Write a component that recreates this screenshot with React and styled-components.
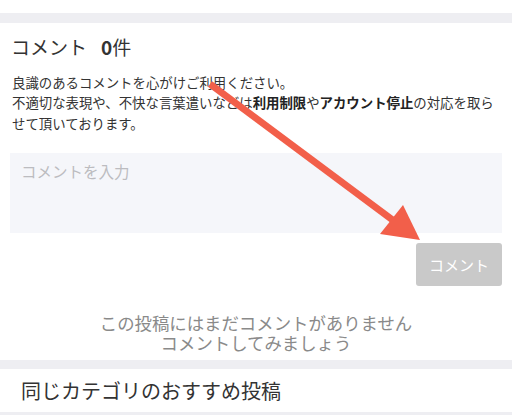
import React from "react";
import styled, { createGlobalStyle } from "styled-components";

const GlobalStyle = createGlobalStyle`
  html, body {
    margin: 0;
    padding: 0;
    background: #fff;
  }
  body {
    font-family: "Noto Sans CJK JP", "Noto Sans", sans-serif;
    color: #333;
  }
`;

const Page = styled.div`
  position: relative;
  width: 512px;
  height: 419px;
  overflow: hidden;
  padding-top: 13px;
  box-sizing: border-box;
`;

const Band = styled.div`
  height: ${props => props.h || 10}px;
  background: #eeeef2;
`;

const Section = styled.section`
  padding: 0 10px;
`;

const Title = styled.h2`
  margin: 12px 0 0;
  padding-left: 1px;
  font-size: 19px;
  line-height: 24px;
  font-weight: 400;
  color: #333;
  b {
    font-weight: 700;
    margin-left: 14px;
  }
`;

const Notice = styled.p`
  margin: 12.5px 0 0;
  padding-left: 2px;
  font-size: 13.4px;
  line-height: 20.5px;
  color: #333;
  b {
    font-weight: 700;
    color: #222;
  }
`;

const Input = styled.textarea`
  display: block;
  width: 100%;
  height: 80px;
  margin-top: 20px;
  box-sizing: border-box;
  border: none;
  outline: none;
  resize: none;
  background: #f5f6fa;
  padding: 8px 11px;
  font-family: "Noto Sans CJK JP", sans-serif;
  font-size: 15.5px;
  line-height: 20px;
  color: #333;
  &::placeholder {
    color: #bcbcc0;
  }
`;

const ButtonRow = styled.div`
  display: flex;
  justify-content: flex-end;
  margin-top: 10px;
`;

const SubmitButton = styled.button`
  width: 86px;
  height: 43px;
  border: none;
  border-radius: 3px;
  background: #c9c9c9;
  color: #fff;
  font-family: "Noto Sans CJK JP", sans-serif;
  font-size: 15px;
  padding: 0;
`;

const Empty = styled.p`
  margin: 27px 0 7px;
  text-align: center;
  font-size: 17.4px;
  line-height: 20px;
  color: #8a8a8a;
`;

const Heading = styled.h3`
  margin: 0;
  padding: 10px 21px 9px;
  font-size: 20px;
  line-height: 24px;
  font-weight: 400;
  color: #333;
`;

const Arrow = styled.svg`
  position: absolute;
  left: 0;
  top: 0;
  pointer-events: none;
`;

export default function App() {
  return (
    <Page>
      <GlobalStyle />
      <Band h={10} />
      <Section>
        <Title>
          コメント<b>0</b>件
        </Title>
        <Notice>
          良識のあるコメントを心がけご利用ください。
          <br />
          不適切な表現や、不快な言葉遣いなどは<b>利用制限</b>や<b>アカウント停止</b>の対応を取らせて頂いております。
        </Notice>
        <Input placeholder="コメントを入力" />
        <ButtonRow>
          <SubmitButton disabled>コメント</SubmitButton>
        </ButtonRow>
        <Empty>
          この投稿にはまだコメントがありません
          <br />
          コメントしてみましょう
        </Empty>
      </Section>
      <Band h={9} />
      <Heading>同じカテゴリのおすすめ投稿</Heading>
      <Band h={3} />
      <Arrow width="512" height="419" viewBox="0 0 512 419">
        <line x1="210" y1="84" x2="394" y2="221" stroke="#f25f4a" strokeWidth="7" />
        <polygon points="380,234 403,205 420,240" fill="#f25f4a" />
      </Arrow>
    </Page>
  );
}
